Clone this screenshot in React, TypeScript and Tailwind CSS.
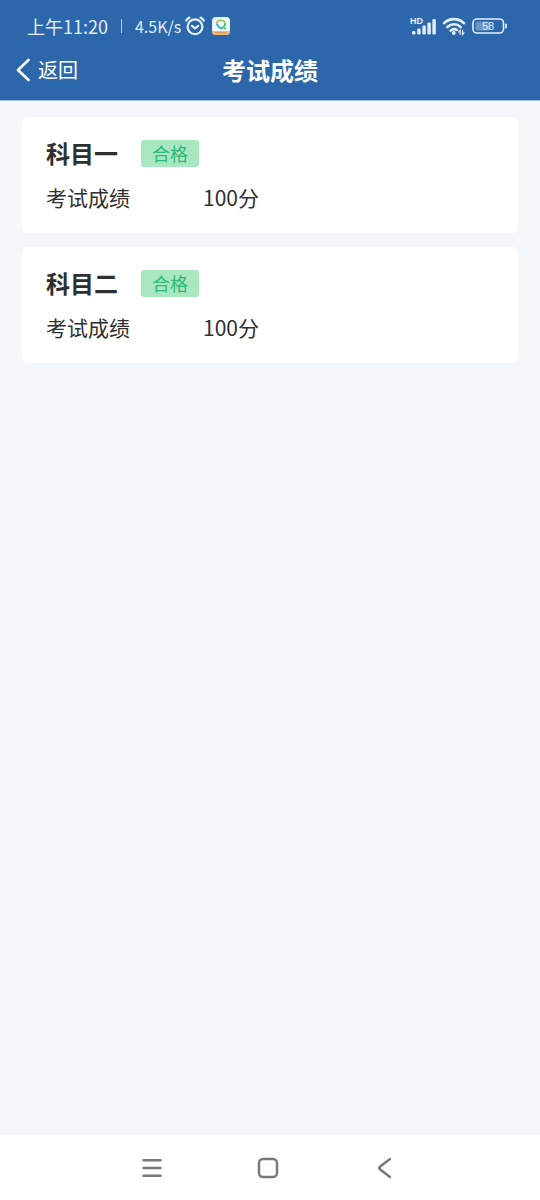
import React from "react";

type Subject = {
  id: number;
  name: string;
  status: string;
  score: number;
};

const subjects: Subject[] = [
  { id: 1, name: "科目一", status: "合格", score: 100 },
  { id: 2, name: "科目二", status: "合格", score: 100 },
];

const AlarmIcon = () => (
  <svg width="20" height="20" viewBox="0 0 20 20" fill="none" stroke="currentColor" strokeWidth="2.2" strokeLinecap="round" aria-hidden="true">
    <circle cx="10" cy="10.8" r="7.4" />
    <path d="M1.2 4.6C1.8 3.2 2.8 2.2 4.4 1.6M18.8 4.6C18.2 3.2 17.2 2.2 15.6 1.6" />
    <path d="m7 9.8 3 2.6 3.2-2.6" strokeLinejoin="round" />
  </svg>
);

const AppBadgeIcon = () => (
  <svg width="18" height="18" viewBox="0 0 18 18" aria-hidden="true">
    <defs>
      <linearGradient id="badge-bg" x1="0" y1="0" x2="1" y2="1">
        <stop offset="0" stopColor="#cfeefa" />
        <stop offset="0.5" stopColor="#f4fbf8" />
        <stop offset="1" stopColor="#f6f3d8" />
      </linearGradient>
      <clipPath id="badge">
        <rect width="18" height="18" rx="4" />
      </clipPath>
    </defs>
    <g clipPath="url(#badge)">
      <rect width="18" height="18" fill="url(#badge-bg)" />
      <rect y="14" width="18" height="4" fill="#f1b47a" />
      <path d="M4 15.6h10" stroke="#d98a45" strokeWidth="1.2" strokeDasharray="1.6 0.8" />
    </g>
    <g fill="none" strokeWidth="1.8" strokeLinecap="round">
      <path d="M9 11.4C7 10 4.8 8.400 4.800 6.400" stroke="#3fa9e8" />
      <path d="M4.800 6.200C5 4.400 6.400 3.400 8.600 3.400" stroke="#f2a65a" />
      <path d="M8.800 3.400C11.400 3.200 13.200 4.600 13.200 6.800" stroke="#8fd45c" />
      <path d="M13.200 7C13 8.800 11.400 10.200 9.200 11.400" stroke="#35c48d" />
      <path d="M12.600 11.400h0.400" stroke="#35b873" />
    </g>
  </svg>
);

const SignalIcon = () => (
  <svg width="26" height="20" viewBox="0 0 26 20" fill="currentColor" aria-hidden="true">
    <text x="0" y="8" fontSize="9" fontWeight="700" fontFamily="Liberation Sans, sans-serif">HD</text>
    <rect x="2" y="15" width="3.4" height="3.5" rx="1.2" />
    <rect x="7.2" y="12.500" width="3.400" height="6" rx="1.200" />
    <rect x="12.400" y="9.500" width="3.400" height="9" rx="1.200" />
    <rect x="17.400" y="6.500" width="3.400" height="12" rx="1.200" />
    <rect x="22.400" y="3" width="3.400" height="15.500" rx="1.200" />
  </svg>
);

const WifiIcon = () => (
  <svg width="24" height="20" viewBox="0 0 24 20" fill="none" stroke="currentColor" strokeWidth="2.600" strokeLinecap="round" aria-hidden="true">
    <path d="M2 7.200C7.600 1.800 16.400 1.800 22 7.200" />
    <path d="M5.400 11C9.200 7.400 14.800 7.400 18.600 11" />
    <path d="M8.600 14.600C10.400 13 13.200 12.800 15 14" />
    <circle cx="11.800" cy="17" r="1.900" fill="currentColor" stroke="none" />
    <path d="M18.200 18.400v-4l-1.400 1.600M20.600 14.400v4l1.400-1.600" strokeWidth="1.200" />
  </svg>
);

const BatteryIcon = () => (
  <svg width="36" height="18" viewBox="0 0 36 18" aria-hidden="true">
    <rect x="1" y="2" width="30.500" height="14" rx="4" fill="none" stroke="currentColor" strokeWidth="1.600" />
    <rect x="3.500" y="4.500" width="15" height="9" rx="2" fill="#fff" fillOpacity="0.300" />
    <path d="M34 7.400v3.200" stroke="currentColor" strokeWidth="1.800" strokeLinecap="round" />
    <text x="16" y="13" fontSize="11" textAnchor="middle" fill="currentColor" fontFamily="Liberation Sans, sans-serif">58</text>
  </svg>
);

const StatusBar = () => (
  <div className="flex h-10 items-center justify-between pt-3 pr-8 pl-[27px] text-[#e3eefb]">
    <div className="flex items-center">
      <span className="text-lg leading-7">上午11:20</span>
      <span className="mx-[13px] h-[14px] w-px bg-[#b9cfea]" />
      <span className="text-base leading-7">4.5K/s</span>
      <span className="ml-1 flex items-center gap-[7px]">
        <AlarmIcon />
        <AppBadgeIcon />
      </span>
    </div>
    <div className="flex items-center gap-[6px]">
      <SignalIcon />
      <WifiIcon />
      <BatteryIcon />
    </div>
  </div>
);

const SubjectCard = ({ subject }: { subject: Subject }) => (
  <section className="flex flex-col gap-3 rounded-md bg-white px-6 pt-[19px] pb-[21px]">
    <div className="flex h-[34px] items-center gap-[23px]">
      <h2 className="text-2xl leading-8 font-bold">{subject.name}</h2>
      <span className="rounded-[3px] bg-[#a9e7c0] px-[11px] text-lg leading-[27px] text-[#2cb977]">
        {subject.status}
      </span>
    </div>
    <dl className="grid grid-cols-[157px_1fr] text-[21px] leading-[30px]">
      <dt>考试成绩</dt>
      <dd>{subject.score}分</dd>
    </dl>
  </section>
);

const App = () => {
  return (
    <div className="flex min-h-screen flex-col bg-[#f4f8fa] font-['Noto_Sans_CJK_SC',sans-serif] text-[#2f2f2f]">
      <header className="border-b border-[#a5bfdf] bg-[#2c66ab]">
        <StatusBar />
        <nav className="grid h-[60px] grid-cols-[1fr_auto_1fr] items-center px-4 text-white">
          <button type="button" className="flex items-center gap-2 justify-self-start text-xl leading-7">
            <svg width="14" height="24" viewBox="0 0 14 24" fill="none" stroke="currentColor" strokeWidth="2.6" strokeLinecap="round" strokeLinejoin="round" aria-hidden="true">
              <path d="M12.5 2 2 12l10.5 10" />
            </svg>
            返回
          </button>
          <h1 className="text-2xl leading-8 font-bold">考试成绩</h1>
        </nav>
      </header>

      <main className="flex flex-1 flex-col gap-[14px] px-[22px] py-4">
        {subjects.map((subject) => (
          <SubjectCard key={subject.id} subject={subject} />
        ))}
      </main>

      <footer className="flex h-[65px] items-center justify-center bg-white pr-1 text-[#777777]">
        <button type="button" aria-label="菜单" className="flex w-[116px] justify-center">
          <svg width="24" height="24" viewBox="0 0 24 24" stroke="currentColor" strokeWidth="2.4" strokeLinecap="round">
            <path d="M3.5 4.2h17M3.5 12h17M3.5 19.8h17" />
          </svg>
        </button>
        <button type="button" aria-label="主页" className="flex w-[116px] justify-center">
          <svg width="24" height="24" viewBox="0 0 24 24" fill="none" stroke="currentColor" strokeWidth="2.4">
            <rect x="3" y="3" width="18" height="18" rx="4" />
          </svg>
        </button>
        <button type="button" aria-label="后退" className="flex w-[116px] justify-center">
          <svg width="24" height="24" viewBox="0 0 24 24" fill="none" stroke="currentColor" strokeWidth="2.4" strokeLinecap="round" strokeLinejoin="round">
            <path d="M18 3 7.600 11Q6.600 12 7.600 13L18 21" />
          </svg>
        </button>
      </footer>
    </div>
  );
};

export default App;
